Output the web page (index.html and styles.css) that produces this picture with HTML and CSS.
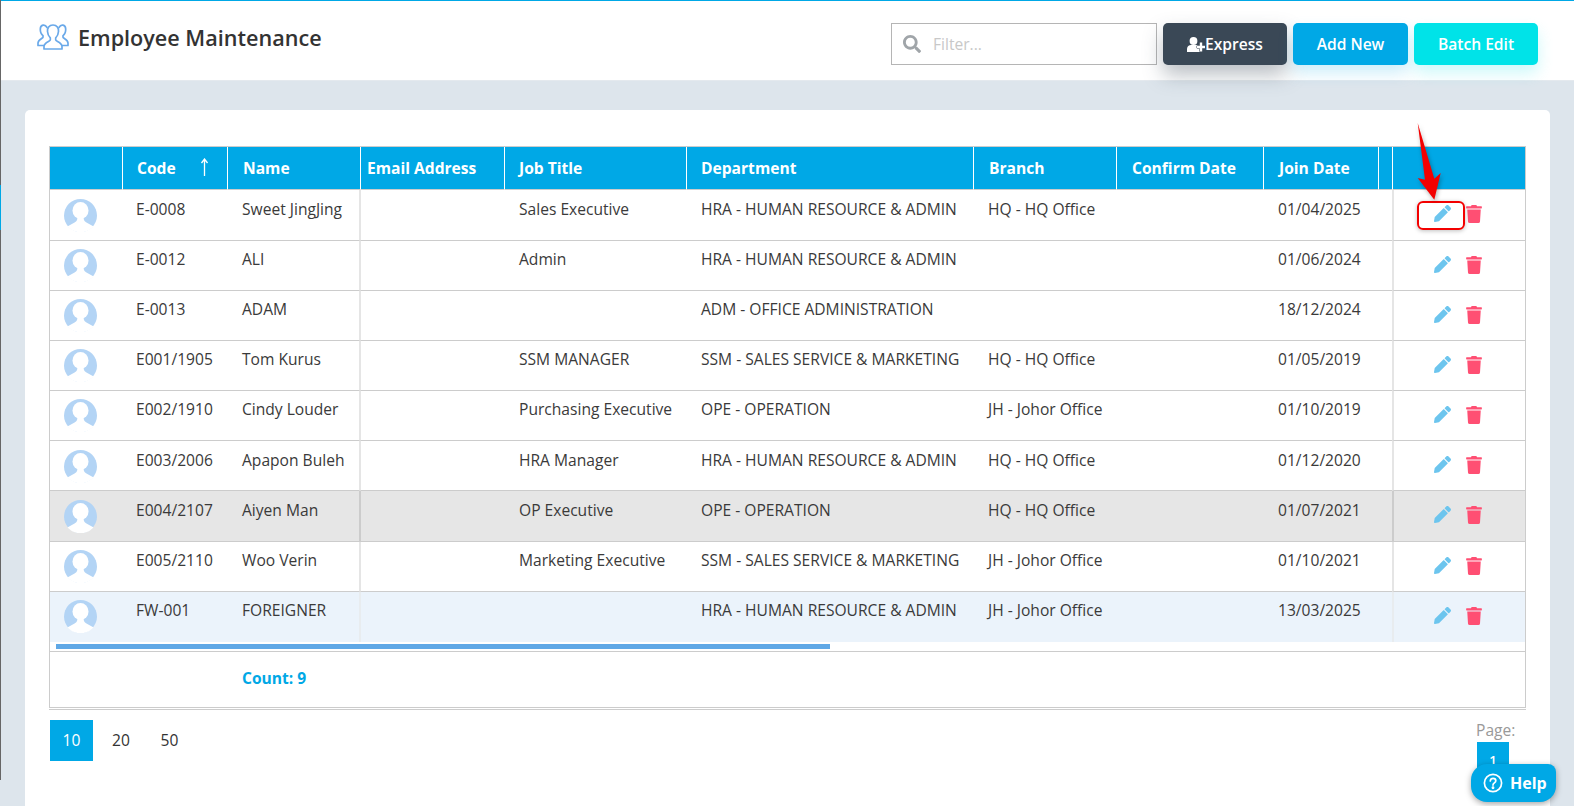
FILE: index.html
```html
<!DOCTYPE html>
<html lang="en">
<head>
<meta charset="utf-8">
<title>Employee Maintenance</title>
<link rel="stylesheet" href="styles.css">
</head>
<body>
<svg class="defs" width="0" height="0" aria-hidden="true">
  <clipPath id="av-clip"><circle cx="16.500" cy="16.500" r="16.800"/></clipPath>
  <symbol id="avatar" viewBox="0 0 33 33">
    <circle cx="16.500" cy="16.500" r="16.500" fill="#b3d4f5"/>
    <g clip-path="url(#av-clip)" fill="#fff">
      <ellipse cx="16.500" cy="11.500" rx="8" ry="8.500"/>
      <path d="M13.500 17c0 3.500-.5 5-2.500 6.300L2 28.300V34h29v-5.700l-9-5c-2-1.300-2.500-2.800-2.500-6.300z"/>
    </g>
  </symbol>
  <symbol id="pencil" viewBox="0 0 512 512">
    <path d="M497.900 142.100l-46.100 46.100c-4.700 4.700-12.300 4.700-17 0l-111-111c-4.700-4.700-4.700-12.300 0-17l46.100-46.100c18.700-18.700 49.100-18.700 67.900 0l60.100 60.100c18.800 18.700 18.800 49.100 0 67.900zM284.200 99.800L21.600 362.400.4 483.900c-2.900 16.400 11.400 30.600 27.800 27.800l121.500-21.300 262.600-262.600c4.700-4.700 4.700-12.300 0-17l-111-111c-4.800-4.700-12.400-4.700-17.100 0z"/>
  </symbol>
  <symbol id="trash" viewBox="0 0 448 512">
    <path d="M432 32H312l-9.400-18.700A24 24 0 0 0 281.100 0H166.800a23.720 23.720 0 0 0-21.400 13.300L136 32H16A16 16 0 0 0 0 48v32a16 16 0 0 0 16 16h416a16 16 0 0 0 16-16V48a16 16 0 0 0-16-16zM53.200 467a48 48 0 0 0 47.900 45h245.800a48 48 0 0 0 47.900-45L416 128H32z"/>
  </symbol>
</svg>

<div class="edge"><div class="edge-mark"></div></div>

<header class="topbar">
  <div class="title-group">
    <svg class="title-icon" viewBox="0 0 32 27" fill="none" stroke="#6aa9e9" stroke-width="1.700" stroke-linejoin="round" stroke-linecap="round">
      <path d="M10 4.500C8 .8 3.500 1.500 3.300 6c-.1 3 1 5.400 2.700 6.600v1.600c0 1-5 2.300-5 5.800v2.500h6"/>
      <path d="M22 4.500C24 .8 28.500 1.500 28.700 6c.1 3-1 5.400-2.700 6.600v1.600c0 1 5 2.300 5 5.800v2.500h-6"/>
      <path d="M16 2c-4 0-5.800 3-5.500 6.500.2 3 1.300 5 2.800 6.300v2.200c0 1.300-6.300 2.500-6.300 6.500V26h18v-2.500c0-4-6.300-5.200-6.300-6.500v-2.200c1.500-1.300 2.600-3.300 2.800-6.300C21.800 5 20 2 16 2z" fill="#fff"/>
    </svg>
    <h1 class="title">Employee Maintenance</h1>
  </div>
  <div class="actions-bar">
    <label class="filter">
      <svg class="filter-icon" viewBox="0 0 512 512"><path d="M505 442.700L405.300 343c-4.500-4.500-10.600-7-17-7H372c27.600-35.300 44-79.700 44-128C416 93.100 322.900 0 208 0S0 93.100 0 208s93.100 208 208 208c48.300 0 92.700-16.400 128-44v16.300c0 6.400 2.500 12.500 7 17l99.700 99.700c9.400 9.400 24.600 9.400 33.900 0l28.300-28.300c9.400-9.400 9.400-24.600.1-34zM208 336c-70.700 0-128-57.200-128-128 0-70.700 57.200-128 128-128 70.700 0 128 57.200 128 128 0 70.700-57.200 128-128 128z"/></svg>
      <input class="filter-input" type="text" placeholder="Filter...">
    </label>
    <button class="btn btn-dark">
      <svg class="btn-icon" viewBox="0 0 18 15"><circle cx="6.500" cy="4" r="3.900" fill="#fff"/><path d="M0 15v-3c0-2.500 2-4 4-4h5c2 0 4 1.500 4 4v3z" fill="#fff"/><path d="M12.800 5.500h2.400v3.300h2.800v2.400h-2.800v3.300h-2.400v-3.300H10V8.800h2.800z" fill="#fff" stroke="#3a4856" stroke-width="1" paint-order="stroke"/></svg>Express
    </button>
    <button class="btn btn-blue">Add New</button>
    <button class="btn btn-cyan">Batch Edit</button>
  </div>
</header>

<main class="content">
  <section class="card">
    <div class="grid-box">
      <table class="grid">
        <colgroup>
          <col class="c-avatar"><col class="c-code"><col class="c-name"><col class="c-email"><col class="c-job"><col class="c-dept"><col class="c-branch"><col class="c-confirm"><col class="c-join"><col class="c-gap"><col class="c-act">
        </colgroup>
        <thead>
          <tr>
            <th></th>
            <th class="tight">Code<svg class="sort" viewBox="0 0 9 18" fill="none" stroke="#fff" stroke-width="1.300"><path d="M4.500 18V1.500M1.500 5l3-4 3 4" /></svg></th>
            <th>Name</th>
            <th class="th-email">Email Address</th>
            <th class="tight">Job Title</th>
            <th class="tight">Department</th>
            <th>Branch</th>
            <th>Confirm Date</th>
            <th>Join Date</th>
            <th></th>
            <th></th>
          </tr>
        </thead>
        <tbody>
          <tr class="first">
            <td class="av"><svg class="avatar"><use href="#avatar"/></svg></td><td class="code">E-0008</td><td class="name">Sweet JingJing</td><td class="email"></td><td>Sales Executive</td><td>HRA - HUMAN RESOURCE &amp; ADMIN</td><td>HQ - HQ Office</td><td></td><td>01/04/2025</td><td></td>
            <td class="act"><span class="act-wrap"><svg class="i-pencil"><use href="#pencil"/></svg><svg class="i-trash"><use href="#trash"/></svg></span></td>
          </tr>
          <tr>
            <td class="av"><svg class="avatar"><use href="#avatar"/></svg></td><td class="code">E-0012</td><td class="name">ALI</td><td class="email"></td><td>Admin</td><td>HRA - HUMAN RESOURCE &amp; ADMIN</td><td></td><td></td><td>01/06/2024</td><td></td>
            <td class="act"><span class="act-wrap"><svg class="i-pencil"><use href="#pencil"/></svg><svg class="i-trash"><use href="#trash"/></svg></span></td>
          </tr>
          <tr>
            <td class="av"><svg class="avatar"><use href="#avatar"/></svg></td><td class="code">E-0013</td><td class="name">ADAM</td><td class="email"></td><td></td><td>ADM - OFFICE ADMINISTRATION</td><td></td><td></td><td>18/12/2024</td><td></td>
            <td class="act"><span class="act-wrap"><svg class="i-pencil"><use href="#pencil"/></svg><svg class="i-trash"><use href="#trash"/></svg></span></td>
          </tr>
          <tr>
            <td class="av"><svg class="avatar"><use href="#avatar"/></svg></td><td class="code">E001/1905</td><td class="name">Tom Kurus</td><td class="email"></td><td>SSM MANAGER</td><td>SSM - SALES SERVICE &amp; MARKETING</td><td>HQ - HQ Office</td><td></td><td>01/05/2019</td><td></td>
            <td class="act"><span class="act-wrap"><svg class="i-pencil"><use href="#pencil"/></svg><svg class="i-trash"><use href="#trash"/></svg></span></td>
          </tr>
          <tr>
            <td class="av"><svg class="avatar"><use href="#avatar"/></svg></td><td class="code">E002/1910</td><td class="name">Cindy Louder</td><td class="email"></td><td>Purchasing Executive</td><td>OPE - OPERATION</td><td>JH - Johor Office</td><td></td><td>01/10/2019</td><td></td>
            <td class="act"><span class="act-wrap"><svg class="i-pencil"><use href="#pencil"/></svg><svg class="i-trash"><use href="#trash"/></svg></span></td>
          </tr>
          <tr class="low">
            <td class="av"><svg class="avatar"><use href="#avatar"/></svg></td><td class="code">E003/2006</td><td class="name">Apapon Buleh</td><td class="email"></td><td>HRA Manager</td><td>HRA - HUMAN RESOURCE &amp; ADMIN</td><td>HQ - HQ Office</td><td></td><td>01/12/2020</td><td></td>
            <td class="act"><span class="act-wrap"><svg class="i-pencil"><use href="#pencil"/></svg><svg class="i-trash"><use href="#trash"/></svg></span></td>
          </tr>
          <tr class="hover">
            <td class="av"><svg class="avatar"><use href="#avatar"/></svg></td><td class="code">E004/2107</td><td class="name">Aiyen Man</td><td class="email"></td><td>OP Executive</td><td>OPE - OPERATION</td><td>HQ - HQ Office</td><td></td><td>01/07/2021</td><td></td>
            <td class="act"><span class="act-wrap"><svg class="i-pencil"><use href="#pencil"/></svg><svg class="i-trash"><use href="#trash"/></svg></span></td>
          </tr>
          <tr>
            <td class="av"><svg class="avatar"><use href="#avatar"/></svg></td><td class="code">E005/2110</td><td class="name">Woo Verin</td><td class="email"></td><td>Marketing Executive</td><td>SSM - SALES SERVICE &amp; MARKETING</td><td>JH - Johor Office</td><td></td><td>01/10/2021</td><td></td>
            <td class="act"><span class="act-wrap"><svg class="i-pencil"><use href="#pencil"/></svg><svg class="i-trash"><use href="#trash"/></svg></span></td>
          </tr>
          <tr class="selected">
            <td class="av"><svg class="avatar"><use href="#avatar"/></svg></td><td class="code">FW-001</td><td class="name">FOREIGNER</td><td class="email"></td><td></td><td>HRA - HUMAN RESOURCE &amp; ADMIN</td><td>JH - Johor Office</td><td></td><td>13/03/2025</td><td></td>
            <td class="act"><span class="act-wrap"><svg class="i-pencil"><use href="#pencil"/></svg><svg class="i-trash"><use href="#trash"/></svg></span></td>
          </tr>
        </tbody>
      </table>
      <div class="scroll-track"><div class="scroll-thumb"></div></div>
      <div class="summary"><span class="count">Count: 9</span></div>
    </div>
    <div class="grid-rule"></div>
    <div class="pager">
      <div class="sizes">
        <span class="size size-on">10</span>
        <span class="size">20</span>
        <span class="size">50</span>
      </div>
      <div class="pages">
        <span class="page-label">Page:</span>
        <span class="page-num">1</span>
      </div>
    </div>
  </section>
</main>

<div class="callout"></div>
<svg class="arrow" viewBox="0 0 40 90"><path d="M2.700 2L19.300 57.700 25.700 52 19.300 78.700 2.700 57 10 58.700z" fill="#f30000"/></svg>

<button class="help">
  <svg class="help-icon" viewBox="0 0 20 20" fill="none" stroke="#fff" stroke-width="1.700"><circle cx="10" cy="10" r="8.600"/><path d="M7.300 8c0-1.800 1.200-2.700 2.800-2.700s2.700 1 2.700 2.400c0 2.300-2.800 2.100-2.800 4.400" stroke-linecap="round"/><circle cx="10" cy="14.700" r=".6" fill="#fff"/></svg>
  Help
</button>
</body>
</html>
```

FILE: styles.css
```css
* { box-sizing: border-box; }
html, body { margin: 0; padding: 0; height: 100%; overflow: hidden; }
body {
  background: #dde5ec;
  font-family: "Open Sans", "Liberation Sans", sans-serif;
  font-size: 15.6px;
  color: #3a3a3a;
  display: flex;
  flex-direction: column;
}
.defs { position: absolute; }

.edge { position: absolute; left: 0; top: 0; width: 1px; height: 780px; background: #666; z-index: 5; }
.edge-mark { margin-top: 185px; height: 45px; background: #00a8e6; }

.topbar {
  height: 81px;
  flex: none;
  background: #fff;
  border-top: 1px solid #00a8e6;
  border-bottom: 1px solid #e4e9ee;
  display: flex;
  justify-content: space-between;
  align-items: flex-start;
  padding: 22px 36px 0 37px;
}
.title-group { display: flex; align-items: flex-start; gap: 9px; }
.title-icon { width: 32px; height: 27px; }
.title { margin: 0; font-size: 21.600px; font-weight: 600; line-height: 30px; color: #333; }

.actions-bar { display: flex; gap: 6px; }
.filter {
  width: 266px; height: 42px; border: 1px solid #b5b5b5; background: #fff;
  display: flex; align-items: center; padding-left: 11px; gap: 12px;
}
.filter-icon { width: 18px; height: 18px; fill: #a0a5a9; flex: none; }
.filter-input {
  border: 0; outline: 0; padding: 0; flex: 1; min-width: 0;
  font: 15.600px "Open Sans", sans-serif; background: transparent;
}
.filter-input::placeholder { color: #c8c8c8; opacity: 1; }
.btn {
  height: 42px; border: 0; border-radius: 5px; color: #fff;
  font: 600 15.600px "Open Sans", sans-serif; padding: 0;
  display: flex; align-items: center; justify-content: center;
}
.btn-icon { width: 18px; height: 15px; flex: none; }
.btn-dark { width: 124px; background: #3a4856; box-shadow: 0 10px 20px rgba(58,72,86,.35); }
.btn-blue { width: 115px; background: #00a8e6; box-shadow: 0 8px 16px rgba(0,168,230,.2); }
.btn-cyan { width: 124px; background: #00e3e8; box-shadow: 0 8px 16px rgba(0,227,232,.2); }

.content { flex: 1; min-height: 0; display: flex; flex-direction: column; padding: 29px 24px 0 25px; }
.card { flex: 1; background: #fff; border-radius: 5px 5px 0 0; padding: 36px 25px 0 24px; }

.grid-box { border: 1px solid #ccc; width: 1477px; }
.grid { border-collapse: separate; border-spacing: 0; table-layout: fixed; width: 1475px; }
.c-avatar { width: 72px; } .c-code { width: 105px; } .c-name { width: 133px; } .c-email { width: 144px; }
.c-job { width: 182px; } .c-dept { width: 287px; } .c-branch { width: 143px; } .c-confirm { width: 147px; }
.c-join { width: 115px; } .c-gap { width: 14px; } .c-act { width: 133px; }

.grid th {
  height: 43px; background: #00a8e6; color: #fff; font-weight: 700; font-size: 15.600px; text-align: left;
  padding: 0 0 0 15px; border-left: 1px solid #fff; border-bottom: 1px solid #ccc; white-space: nowrap;
}
.grid th:first-child { border-left: 0; }
.grid th.tight { padding-left: 14px; }
.grid th.th-email { padding-left: 6px; }
.sort { width: 9px; height: 18px; margin-left: 24px; vertical-align: -2px; }

.grid td {
  height: 50px; padding: 8px 0 0 15px; vertical-align: top; line-height: 20px;
  border-bottom: 1px solid #ccc; white-space: nowrap; overflow: hidden;
}
.grid .first td { height: 51px; padding-top: 9px; }
.grid .low td { padding-top: 9px; }
.grid .hover td { background: #e6e6e6; height: 51px; padding-top: 9px; }
.grid td.av { padding-left: 14px; }
.grid td.code { padding-left: 14px; }
.avatar { width: 33px; height: 33px; display: block; }
.grid .name { border-right: 1px solid #e5e5e5; }
.grid .email { border-left: 1px solid #e5e5e5; }
.grid tr td.act { border-left: 2px solid #e5e5e5; padding: 15px 0 0 40px; }
.act-wrap { display: flex; align-items: flex-start; gap: 15px; }
.i-pencil { width: 17px; height: 17px; fill: #6cc5ee; flex: none; }
.i-trash { width: 16px; height: 18px; fill: #ff4f73; flex: none; }
.grid .hover .name, .grid .hover .email { border-right-color: #ccc; border-left-color: #ccc; }
.grid .hover .act { border-left-color: #ccc; }
.grid .selected td { background: #ebf3fb; border-bottom: 0; }
.grid .selected .name, .grid .selected .email, .grid .selected .act { border-right-color: #e8ecef; border-left-color: #e8ecef; }

.scroll-track { height: 10px; padding: 2px 0 0 6px; border-bottom: 1px solid #ccc; }
.scroll-thumb { width: 774px; height: 5px; background: #5fa8e6; }
.summary { height: 55px; padding: 15px 0 0 192px; }
.count { color: #00a8e6; font-weight: 700; font-size: 15.600px; line-height: 20px; }
.grid-rule { width: 1477px; border-bottom: 1px solid #ccc; height: 2px; }

.pager { width: 1477px; display: flex; justify-content: space-between; margin-top: 10px; }
.sizes { display: flex; padding-left: 1px; }
.size { width: 48px; height: 41px; padding-bottom: 2px; display: flex; align-items: center; justify-content: center; color: #333; }
.size-on { width: 43px; background: #00a8e6; color: #fff; }
.size-on + .size { width: 56px; }
.size + .size + .size { width: 41px; }
.pages { display: flex; flex-direction: column; align-items: flex-start; width: 50px; margin-top: 0; }
.page-label { color: #999; line-height: 20px; }
.page-num { width: 32px; height: 35px; margin: 2px 0 0 1px; background: #00a8e6; color: #fff; font-size: 13px; font-weight: 600; display: flex; align-items: center; justify-content: center; }

.callout {
  position: absolute; left: 1417px; top: 201px; width: 48px; height: 29px;
  border: 2px solid #f30000; border-radius: 6px; box-shadow: 0 1px 4px rgba(0,0,0,.25);
}
.arrow {
  position: absolute; left: 1415px; top: 121px; width: 40px; height: 90px; filter: drop-shadow(1px 2px 2px rgba(0,0,0,.3));
}
.help {
  position: absolute; left: 1471px; top: 764px; width: 85px; height: 38px;
  background: #00a8e6; border: 0; color: #fff; font: 700 16px "Open Sans", sans-serif;
  border-radius: 16px 8px 16px 16px; box-shadow: 0 2px 6px rgba(0,0,0,.35);
  display: flex; align-items: center; padding: 0 0 0 12px; gap: 7px;
}
.help-icon { width: 20px; height: 20px; flex: none; }
```
